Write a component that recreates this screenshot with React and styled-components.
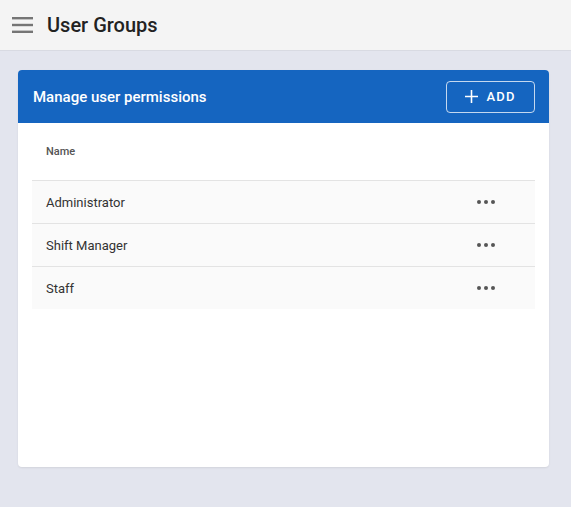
import React from 'react'
import styled, { createGlobalStyle } from 'styled-components'

const Global = createGlobalStyle`
  body { margin: 0; background: #e3e5ee; font-family: Roboto, "Noto Sans", sans-serif; }
`

const TopBar = styled.div`
  height: 50px;
  background: #f4f4f4;
  border-bottom: 1px solid #d8dae2;
  display: flex;
  align-items: center;
  padding-left: 12px;
  gap: 13px;
`

const Title = styled.h1`
  margin: 0;
  font-size: 20px;
  font-weight: 500;
  color: #222;
`

const Page = styled.div`
  padding: 19px 22px 39px 18px;
`

const Card = styled.div`
  background: #fff;
  border-radius: 4px;
  height: 397px;
  overflow: hidden;
  box-shadow: 0 1px 2px rgba(0,0,0,0.08);
`

const CardHeader = styled.div`
  height: 53px;
  background: #1565c0;
  display: flex;
  align-items: center;
  justify-content: space-between;
  padding: 0 14px 0 15px;
  color: #fff;
  font-size: 15px;
  font-weight: 500;
`

const AddButton = styled.button`
  width: 89px;
  height: 32px;
  border: 1px solid rgba(255,255,255,0.75);
  border-radius: 4px;
  background: transparent;
  color: #fff;
  font-family: inherit;
  font-size: 13px;
  font-weight: 500;
  letter-spacing: 1.2px;
  display: flex;
  align-items: center;
  justify-content: center;
  gap: 8px;
`

const Table = styled.div`
  margin: 0 14px 0 14px;
  padding-top: 22px;
`

const HeadRow = styled.div`
  height: 35px;
  padding-left: 14px;
  font-size: 11px;
  font-weight: 500;
  color: #555;
  border-bottom: 1px solid #e3e3e3;
`

const Row = styled.div`
  height: 42px;
  display: flex;
  align-items: center;
  justify-content: space-between;
  padding: 0 40px 0 14px;
  background: #fafafa;
  font-size: 13px;
  color: #333;
  border-bottom: ${p => (p.last ? 'none' : '1px solid #e3e3e3')};
`

const Dots = styled.span`
  display: flex;
  gap: 3px;
  span { width: 4px; height: 4px; border-radius: 50%; background: #555; }
`

const Menu = () => (
  <svg width="22" height="18" viewBox="0 0 22 18">
    <rect x="0" y="1" width="21" height="2.4" fill="#757575" />
    <rect x="0" y="7.8" width="21" height="2.4" fill="#757575" />
    <rect x="0" y="14.6" width="21" height="2.4" fill="#757575" />
  </svg>
)

const groups = ['Administrator', 'Shift Manager', 'Staff']

export default function App() {
  return (
    <>
      <Global />
      <TopBar>
        <Menu />
        <Title>User Groups</Title>
      </TopBar>
      <Page>
        <Card>
          <CardHeader>
            Manage user permissions
            <AddButton>
              <svg width="13" height="13" viewBox="0 0 13 13">
                <path d="M6.5 0v13M0 6.5h13" stroke="#fff" strokeWidth="1.6" />
              </svg>
              ADD
            </AddButton>
          </CardHeader>
          <Table>
            <HeadRow>Name</HeadRow>
            {groups.map((g, i) => (
              <Row key={g} last={i === groups.length - 1}>
                {g}
                <Dots><span /><span /><span /></Dots>
              </Row>
            ))}
          </Table>
        </Card>
      </Page>
    </>
  )
}
